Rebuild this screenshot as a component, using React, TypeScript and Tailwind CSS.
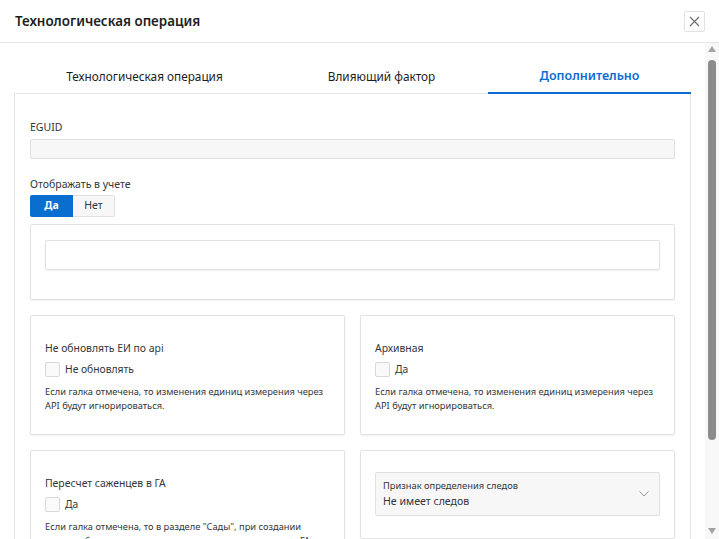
import React from 'react';

const font = { fontFamily: '"Noto Sans", "Open Sans", sans-serif' };

const Checkbox: React.FC<{ label: string }> = ({ label }) => (
    <div className="flex items-center gap-[5px] mt-[6px]">
        <div className="w-[15px] h-[15px] border border-[#d9d9d9] rounded-[2px] bg-[#fafafa]"></div>
        <span className="text-[10.3px] text-[#32363a]">{label}</span>
    </div>
);

const OptionCard: React.FC<{ title: string; check: string; hint: string[] }> = ({ title, check, hint }) => (
    <div className="h-[120px] overflow-hidden border border-[#e2e2e2] rounded-[2px] shadow-[0_1px_2px_rgba(0,0,0,0.06)] px-[14px] pt-[24px]">
        <p className="text-[10.4px] leading-[16px] text-[#32363a]">{title}</p>
        <Checkbox label={check} />
        <div className="mt-[8px] text-[9.3px] leading-[14px] text-[#32363a] whitespace-nowrap">
            {hint.map(line => (
                <p key={line}>{line}</p>
            ))}
        </div>
    </div>
);

const App: React.FC = () => {
    return (
        <div className="w-[719px] h-[539px] overflow-hidden bg-white flex flex-col text-[#32363a]" style={font}>
            {/* header */}
            <div className="h-[43px] shrink-0 flex items-center justify-between pl-[15px] pr-[14px] border-b border-[#e4e4e4]">
                <h1 className="text-[13.4px] font-semibold text-[#1d1d1d]">Технологическая операция</h1>
                <button className="w-[21px] h-[21px] border border-[#e2e2e2] rounded-[2px] flex items-center justify-center">
                    <svg width="11" height="11" viewBox="0 0 11 11">
                        <path d="M1 1L10 10M10 1L1 10" stroke="#6a6d70" strokeWidth="1.1" />
                    </svg>
                </button>
            </div>

            <div className="flex flex-1 min-h-0">
                <div className="flex-1 pl-[14px] pr-[14px] pt-[17px] flex flex-col min-h-0">
                    {/* tabs */}
                    <div className="flex h-[34px] shrink-0 text-[11.8px] text-[#1d1d1d]">
                        <div className="w-[261px] pt-[1px] flex items-center justify-center border-b border-[#e4e4e4]">Технологическая операция</div>
                        <div className="w-[213px] pt-[1px] flex items-center justify-center border-b border-[#e4e4e4]">Влияющий фактор</div>
                        <div className="w-[203px] pt-[1px] flex items-center justify-center border-b-[2px] border-[#0a6ed1] text-[12.5px] font-semibold text-[#0a6ed1]">Дополнительно</div>
                    </div>

                    {/* panel */}
                    <div className="flex-1 border-x border-[#e4e4e4] px-[15px] pt-[26px]">
                        <p className="text-[10.5px] leading-[14px]">EGUID</p>
                        <div className="mt-[5px] h-[20px] bg-[#f7f7f7] border border-[#e0e0e0] rounded-[2px]"></div>

                        <p className="mt-[18px] text-[10.5px] leading-[14px]">Отображать в учете</p>
                        <div className="mt-[4px] flex">
                            <div className="w-[43px] h-[22px] bg-[#0a6ed1] text-white text-[10.5px] font-bold flex items-center justify-center rounded-l-[2px]">Да</div>
                            <div className="w-[42px] h-[22px] bg-[#f7f7f7] border border-[#e0e0e0] border-l-0 text-[10.5px] flex items-center justify-center rounded-r-[2px]">Нет</div>
                        </div>

                        <div className="mt-[7px] h-[76px] border border-[#e2e2e2] rounded-[2px] shadow-[0_1px_2px_rgba(0,0,0,0.06)] px-[14px] pt-[15px]">
                            <div className="h-[30px] border border-[#e2e2e2] rounded-[2px] shadow-[0_1px_2px_rgba(0,0,0,0.06)]"></div>
                        </div>

                        <div className="mt-[15px] grid grid-cols-2 gap-[15px]">
                            <OptionCard
                                title="Не обновлять ЕИ по api"
                                check="Не обновлять"
                                hint={['Если галка отмечена, то изменения единиц измерения через', 'API будут игнорироваться.']}
                            />
                            <OptionCard
                                title="Архивная"
                                check="Да"
                                hint={['Если галка отмечена, то изменения единиц измерения через', 'API будут игнорироваться.']}
                            />
                            <OptionCard
                                title="Пересчет саженцев в ГА"
                                check="Да"
                                hint={['Если галка отмечена, то в разделе "Сады", при создании', 'посадки будет пересчитываться количество саженцев в ГА']}
                            />
                            <div className="h-[89px] border border-[#e2e2e2] rounded-[2px] shadow-[0_1px_2px_rgba(0,0,0,0.06)] px-[14px] pt-[21px]">
                                <div className="h-[44px] bg-[#f7f7f7] border border-[#e0e0e0] rounded-[2px] flex items-center justify-between pl-[7px] pr-[10px]">
                                    <div>
                                        <p className="text-[9.3px] leading-[13px]">Признак определения следов</p>
                                        <p className="text-[10.6px] leading-[17px] mt-[1px]">Не имеет следов</p>
                                    </div>
                                    <svg width="10" height="6" viewBox="0 0 10 6">
                                        <path d="M0.5 0.5L5 5L9.5 0.5" fill="none" stroke="#8a8d90" strokeWidth="0.9" />
                                    </svg>
                                </div>
                            </div>
                        </div>
                    </div>
                </div>

                {/* scrollbar */}
                <div className="w-[14px] shrink-0 flex flex-col items-center bg-[#f8f8f8]">
                    <svg width="8" height="6" viewBox="0 0 8 6" className="mt-[3px]">
                        <path d="M4 0L8 6H0Z" fill="#a3a3a3" />
                    </svg>
                    <div className="mt-[8px] w-[8px] h-[380px] bg-[#8c8c8c] rounded-[4px]"></div>
                    <div className="flex-1"></div>
                    <svg width="8" height="6" viewBox="0 0 8 6" className="mb-[5px]">
                        <path d="M0 0H8L4 6Z" fill="#a3a3a3" />
                    </svg>
                </div>
            </div>
        </div>
    );
};

export default App;
